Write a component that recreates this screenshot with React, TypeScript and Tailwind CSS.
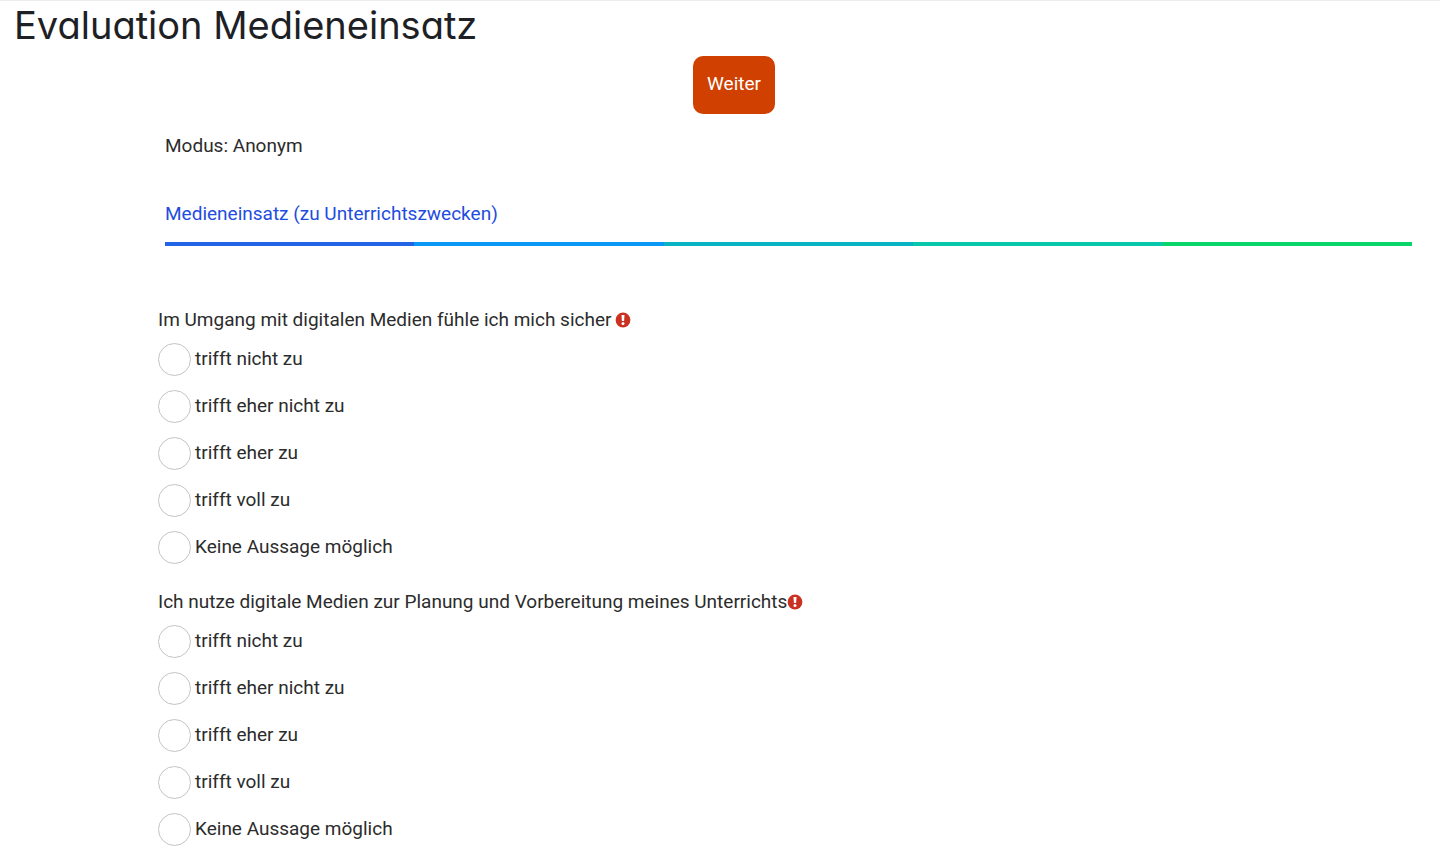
const steps = ["bg-[#2264e5]", "bg-[#0a98f7]", "bg-[#08b4c4]", "bg-[#08c8ac]", "bg-[#08d66a]"];

const answers = [
  "trifft nicht zu",
  "trifft eher nicht zu",
  "trifft eher zu",
  "trifft voll zu",
  "Keine Aussage möglich",
];

const questions = [
  { id: "q1", text: "Im Umgang mit digitalen Medien fühle ich mich sicher", gap: "gap-1" },
  { id: "q2", text: "Ich nutze digitale Medien zur Planung und Vorbereitung meines Unterrichts", gap: "gap-0" },
];

function RequiredIcon() {
  return (
    <svg className="size-4 shrink-0" viewBox="0 0 16 16" role="img" aria-label="Pflichtfrage">
      <circle cx="8" cy="8" r="7.4" fill="#ca3120" />
      <path d="M6.5 3h3l-.4 6H6.9z" fill="#fff" />
      <circle cx="8" cy="11.6" r="1.5" fill="#fff" />
    </svg>
  );
}

function Question({ id, text, gap }: { id: string; text: string; gap: string }) {
  return (
    <fieldset>
      <legend className={`flex items-center leading-7 ${gap}`}>
        {text}
        <RequiredIcon />
      </legend>

      <div className="mt-[9px] flex flex-col items-start gap-[14px]">
        {answers.map((answer) => (
          <label key={answer} className="flex items-center gap-1">
            <input
              type="radio"
              name={id}
              value={answer}
              className="size-[33px] appearance-none rounded-full border border-[#c4c4c4] bg-white checked:border-[10px] checked:border-[#d04000]"
            />
            <span className="pb-0.5">{answer}</span>
          </label>
        ))}
      </div>
    </fieldset>
  );
}

export default function App() {
  return (
    <div className="min-h-screen border-t border-[#ececec] bg-white font-[Roboto,sans-serif] text-[19px] leading-7 text-[#2c2c2c]">
      <h1 className="px-[14px] font-[Inter,sans-serif] text-[38px] leading-12 text-[#1d2125] [font-feature-settings:'cv11']">
        Evaluation Medieneinsatz
      </h1>

      <form onSubmit={(e) => e.preventDefault()}>
        <div className="mt-[7px] flex justify-center pl-7">
          <button type="submit" className="h-[58px] w-[82px] rounded-[10px] bg-[#d04000] pb-0.5 text-white">
            Weiter
          </button>
        </div>

        {/* Modus und Fortschritt */}
        <div className="mt-[18px] mr-7 ml-[165px]">
          <p>Modus: Anonym</p>
          <h2 className="mt-10 text-[#1f4de0]">Medieneinsatz (zu Unterrichtszwecken)</h2>
          <div className="mt-3.5 flex h-1">
            {steps.map((color) => (
              <div key={color} className={`flex-1 ${color}`} />
            ))}
          </div>
        </div>

        {/* Fragen */}
        <div className="mt-15 ml-[158px] flex flex-col gap-6">
          {questions.map((q) => (
            <Question key={q.id} {...q} />
          ))}
        </div>
      </form>
    </div>
  );
}
